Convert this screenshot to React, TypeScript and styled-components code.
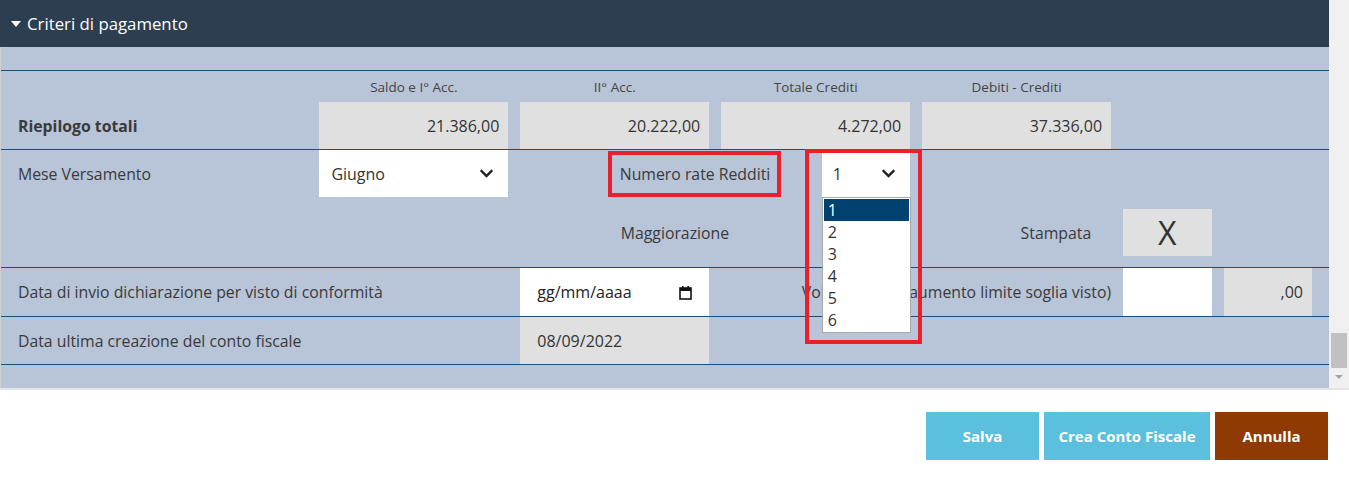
import styled, { createGlobalStyle } from 'styled-components';
import { FaChevronDown } from 'react-icons/fa';

const GlobalStyle = createGlobalStyle`
  body {
    margin: 0;
    background: #ffffff;
    font-family: 'Open Sans', 'Liberation Sans', sans-serif;
    color: #333;
  }
`;

const totals = [
  { label: 'Saldo e I° Acc.', value: '21.386,00', start: 4 },
  { label: 'II° Acc.', value: '20.222,00', start: 6 },
  { label: 'Totale Crediti', value: '4.272,00', start: 8 },
  { label: 'Debiti - Crediti', value: '37.336,00', start: 10 },
];

const rate = ['1', '2', '3', '4', '5', '6'];

function CalendarIcon() {
  return (
    <svg width="13" height="15" viewBox="0 0 13 15">
      <rect x="1" y="3" width="11" height="11" fill="none" stroke="#111" strokeWidth="1.6" />
      <rect x="1" y="3" width="11" height="3" fill="#111" />
      <rect x="3" y="1" width="1.6" height="3" fill="#111" />
      <rect x="8.4" y="1" width="1.6" height="3" fill="#111" />
    </svg>
  );
}

export default function App() {
  return (
    <>
      <GlobalStyle />
      <Frame>
        <Scroller>
          <Panel>
            <PanelHeader>
              <Caret />
              Criteri di pagamento
            </PanelHeader>
            <PanelBody>
              <Section>
                <Grid>
                  {totals.map((t) => (
                    <Cell key={t.label} $start={t.start} $span={2}>
                      <ColHead>{t.label}</ColHead>
                    </Cell>
                  ))}
                </Grid>
                <Grid>
                  <Cell $start={1} $span={3}>
                    <Label $bold>Riepilogo totali</Label>
                  </Cell>
                  {totals.map((t) => (
                    <Cell key={t.value} $start={t.start} $span={2}>
                      <Box $tone="gray" $align="right">
                        {t.value}
                      </Box>
                    </Cell>
                  ))}
                </Grid>
              </Section>

              <Section $gap>
                <Grid>
                  <Cell $start={1} $span={3}>
                    <Label>Mese Versamento</Label>
                  </Cell>
                  <Cell $start={4} $span={2}>
                    <Select>
                      Giugno
                      <FaChevronDown size={15} color="#222" />
                    </Select>
                  </Cell>
                  <Cell $start={7} $span={2}>
                    <Highlight>Numero rate Redditi</Highlight>
                  </Cell>
                  <Cell $start={9} $span={1} $overlay>
                    <Select $small>
                      1
                      <FaChevronDown size={15} color="#222" />
                    </Select>
                    <OptionList>
                      {rate.map((r, i) => (
                        <Option key={r} $active={i === 0}>
                          {r}
                        </Option>
                      ))}
                    </OptionList>
                    <RedFrame />
                  </Cell>
                </Grid>
                <Grid>
                  <Cell $start={7} $span={2}>
                    <Label>Maggiorazione</Label>
                  </Cell>
                  <Cell $start={11} $span={1}>
                    <Label $nudge>Stampata</Label>
                  </Cell>
                  <Cell $start={12} $span={1}>
                    <Box $tone="gray" $align="center">
                      <BigX>X</BigX>
                    </Box>
                  </Cell>
                </Grid>
              </Section>

              <Section>
                <Grid>
                  <Cell $start={1} $span={5}>
                    <Label>Data di invio dichiarazione per visto di conformità</Label>
                  </Cell>
                  <Cell $start={6} $span={2}>
                    <Box $tone="white" $pad={17} $h={48}>
                      <DateText>gg/mm/aaaa</DateText>
                      <CalendarIcon />
                    </Box>
                  </Cell>
                  <Cell $start={8} $span={4}>
                    <Label $right>Volume affari (aumento limite soglia visto)</Label>
                  </Cell>
                  <Cell $start={12} $span={1}>
                    <Box $tone="white" $h={48} />
                  </Cell>
                  <Cell $start={13} $span={1}>
                    <Box $tone="gray" $align="right" $h={48}>
                      ,00
                    </Box>
                  </Cell>
                </Grid>
              </Section>

              <Section>
                <Grid>
                  <Cell $start={1} $span={5}>
                    <Label>Data ultima creazione del conto fiscale</Label>
                  </Cell>
                  <Cell $start={6} $span={2}>
                    <Box $tone="gray" $pad={17}>
                      08/09/2022
                    </Box>
                  </Cell>
                </Grid>
              </Section>
            </PanelBody>
          </Panel>
          <ScrollTrack>
            <ScrollThumb />
            <ScrollArrow />
          </ScrollTrack>
        </Scroller>

        <Actions>
          <Button $kind="info" $w={113}>Salva</Button>
          <Button $kind="info" $w={166}>Crea Conto Fiscale</Button>
          <Button $kind="danger" $w={113}>Annulla</Button>
        </Actions>
      </Frame>
    </>
  );
}

const Frame = styled.div`
  width: 1349px;
  height: 477px;
  overflow: hidden;
`;

const Scroller = styled.div`
  display: flex;
  height: 388px;
  border-bottom: 2px solid #e3e3e3;
`;

const Panel = styled.div`
  flex: 1;
  display: flex;
  flex-direction: column;
`;

const PanelHeader = styled.div`
  height: 47px;
  background: #2c3e50;
  color: #fff;
  display: flex;
  align-items: center;
  padding-left: 11px;
  font-size: 16.8px;
  gap: 6px;
`;

const Caret = styled.span`
  width: 0;
  height: 0;
  border-left: 5px solid transparent;
  border-right: 5px solid transparent;
  border-top: 6px solid #fff;
`;

const PanelBody = styled.div`
  flex: 1;
  background: #b8c4d8;
  border-left: 1px solid #cfcfcf;
  padding-top: 23px;
`;

const Section = styled.div<{ $gap?: boolean }>`
  border-top: 1px solid #1d4f7d;
  display: flex;
  flex-direction: column;
  gap: ${(p) => (p.$gap ? '12px' : '0')};
  padding-bottom: ${(p) => (p.$gap ? '11px' : '0')};

  &:last-child {
    border-bottom: 1px solid #1d4f7d;
  }
`;

const Grid = styled.div`
  display: grid;
  grid-template-columns: repeat(13, 1fr);
  align-items: center;
  padding: 0 11px 0 11px;
`;

const Cell = styled.div<{ $start: number; $span: number; $overlay?: boolean }>`
  grid-column: ${(p) => p.$start} / span ${(p) => p.$span};
  padding: 0 6px;
  position: ${(p) => (p.$overlay ? 'relative' : 'static')};
  z-index: ${(p) => (p.$overlay ? 5 : 'auto')};
`;

const ColHead = styled.div`
  height: 31px;
  display: flex;
  align-items: center;
  justify-content: center;
  font-size: 13.5px;
  color: #444;
`;

const Label = styled.div<{ $bold?: boolean; $right?: boolean; $nudge?: boolean }>`
  font-size: 15.8px;
  color: #3a3a3a;
  font-weight: ${(p) => (p.$bold ? 700 : 400)};
  text-align: ${(p) => (p.$right ? 'right' : 'left')};
  margin-left: ${(p) => (p.$nudge ? '-2px' : '0')};
  white-space: nowrap;
`;

const Box = styled.div<{
  $tone: 'gray' | 'white';
  $align?: 'left' | 'right' | 'center';
  $pad?: number;
  $h?: number;
}>`
  height: ${(p) => p.$h ?? 47}px;
  background: ${(p) => (p.$tone === 'gray' ? '#e0e0e0' : '#ffffff')};
  display: flex;
  align-items: center;
  justify-content: ${(p) =>
    p.$align === 'right' ? 'flex-end' : p.$align === 'center' ? 'center' : 'space-between'};
  padding: 0 ${(p) => (p.$align === 'right' ? 9 : p.$pad ?? 12)}px 0 ${(p) => p.$pad ?? 12}px;
  font-size: 16px;
  color: #333;
  box-sizing: border-box;
`;

const DateText = styled.span`
  font-size: 16px;
  color: #222;
`;

const BigX = styled.span`
  font-size: 32px;
  font-weight: 400;
  color: #333;
  line-height: 1;
`;

const Select = styled.div<{ $small?: boolean }>`
  height: 47px;
  background: #fff;
  display: flex;
  align-items: center;
  justify-content: space-between;
  padding: 0 14px 0 ${(p) => (p.$small ? 11 : 12)}px;
  font-size: 16px;
  color: #333;
`;

const Highlight = styled.div`
  display: inline-flex;
  align-items: center;
  height: 46px;
  box-sizing: border-box;
  margin-left: -13px;
  padding: 0 7px 0 8px;
  border: 4px solid #e8202a;
  font-size: 15.8px;
  color: #3a3a3a;
  white-space: nowrap;
`;

const OptionList = styled.div`
  position: absolute;
  left: 6px;
  top: 47px;
  width: 89px;
  background: #fff;
  border: 1px solid #a9a9a9;
  padding: 1px;
  box-sizing: border-box;
`;

const Option = styled.div<{ $active?: boolean }>`
  height: 22px;
  line-height: 22px;
  padding-left: 4px;
  font-size: 16px;
  background: ${(p) => (p.$active ? '#004170' : 'transparent')};
  color: ${(p) => (p.$active ? '#fff' : '#333')};
`;

const RedFrame = styled.div`
  position: absolute;
  left: -11px;
  top: -1px;
  width: 117px;
  height: 195px;
  border: 4px solid #e8202a;
  box-sizing: border-box;
  pointer-events: none;
`;

const ScrollTrack = styled.div`
  width: 20px;
  background: #f0f0f0;
  position: relative;
`;

const ScrollThumb = styled.div`
  position: absolute;
  left: 2px;
  right: 2px;
  top: 333px;
  height: 35px;
  background: #c1c1c1;
`;

const ScrollArrow = styled.div`
  position: absolute;
  left: 6px;
  top: 375px;
  width: 0;
  height: 0;
  border-left: 4px solid transparent;
  border-right: 4px solid transparent;
  border-top: 4px solid #a3a3a3;
`;

const Actions = styled.div`
  display: flex;
  justify-content: flex-end;
  gap: 5px;
  padding: 22px 21px 0 0;
`;

const Button = styled.button<{ $kind: 'info' | 'danger'; $w: number }>`
  width: ${(p) => p.$w}px;
  height: 48px;
  border: none;
  background: ${(p) => (p.$kind === 'info' ? '#5bc0de' : '#8f3a02')};
  color: #fff;
  font-family: 'Open Sans', 'Liberation Sans', sans-serif;
  font-size: 15px;
  font-weight: 700;
  padding: 0;
`;
